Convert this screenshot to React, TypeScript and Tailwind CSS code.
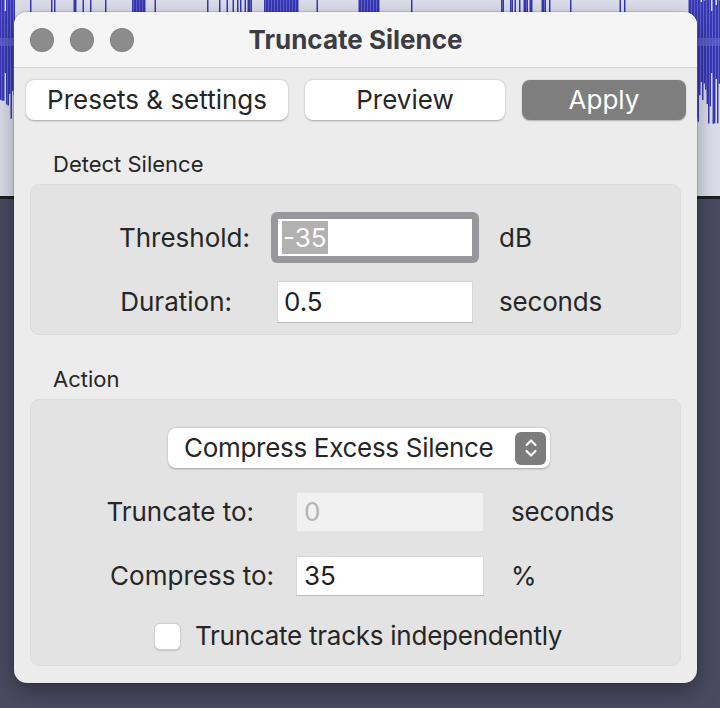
import React from 'react';

// deterministic pseudo random for the waveform behind the dialog
const rand = (i: number) => {
  const x = Math.sin(i * 12.9898 + 78.233) * 43758.5453;
  return x - Math.floor(x);
};

// loud spots of the track that rise above the dialog: [from, to, dense]
const loud: [number, number, boolean][] = [
  [0, 8, true], [9, 14, false], [30, 31, true], [50, 55, false], [73, 85, false],
  [89, 90, true], [105, 106, true], [131, 145, true], [154, 155, true], [206, 211, false],
  [216, 252, false], [264, 298, true], [316, 317, true], [358, 378, true], [410, 411, true],
  [498, 550, false], [569, 573, false], [617, 624, false], [688, 720, true],
];

const bars = Array.from({ length: 480 }, (_, i) => {
  const x = i * 1.5;
  const r = rand(i);
  const spot = loud.find(([a, b]) => x >= a && x <= b);
  let amp = 4 + r * 22;
  if (spot && (spot[2] || r > 0.5)) amp = 44 + rand(i + 999) * 40;
  if (x < 14 || x > 697) amp = 30 + rand(i + 7) * 55;
  return { x, amp };
});

const Waveform = () => (
  <svg className="absolute inset-0" width={720} height={708} viewBox="0 0 720 708">
    <rect x={0} y={0} width={720} height={196} fill="#dddfeb" />
    {bars.map((b) => (
      <line
        key={b.x}
        x1={b.x + 0.75}
        x2={b.x + 0.75}
        y1={Math.max(0, 42 - b.amp)}
        y2={42 + b.amp}
        stroke="#2f2fb6"
        strokeWidth={1.4}
      />
    ))}
    <rect x={0} y={38} width={720} height={8} fill="#6b6bd4" opacity={0.6} />
    <rect x={0} y={196} width={720} height={3} fill="#202022" />
    <rect x={0} y={199} width={720} height={509} fill="#4a4a62" />
  </svg>
);

const PushButton = ({ label, primary }: { label: string; primary?: boolean }) => (
  <button
    className={
      primary
        ? 'h-[40px] rounded-[8px] bg-[#7e7e7e] text-[26px] leading-[30px] text-white shadow-[0_0.5px_1.5px_rgba(0,0,0,0.25)]'
        : 'h-[40px] rounded-[8px] bg-white text-[26px] leading-[30px] text-[#262626] shadow-[0_0.5px_2px_rgba(0,0,0,0.3)]'
    }
  >
    {label}
  </button>
);

export default function App() {
  return (
    <div
      className="relative h-[708px] w-[720px] overflow-hidden"
      style={{ fontFamily: 'Inter, "Liberation Sans", sans-serif' }}
    >
      <Waveform />

      <div className="relative ml-[14px] mt-[12px] flex h-[671px] w-[683px] flex-col overflow-hidden rounded-[13px] bg-[#ececec] shadow-[0_0_0_1px_rgba(0,0,0,0.12),0_8px_24px_rgba(0,0,0,0.35)]">
        {/* title bar */}
        <div className="relative flex h-[56px] items-center border-b border-[#d4d4d4] bg-[#f5f5f5] pl-[16px]">
          <div className="flex gap-[16px]">
            <span className="h-[24px] w-[24px] rounded-full bg-[#8c8c8c] shadow-[inset_0_0_0_1px_rgba(0,0,0,0.1)]" />
            <span className="h-[24px] w-[24px] rounded-full bg-[#8c8c8c] shadow-[inset_0_0_0_1px_rgba(0,0,0,0.1)]" />
            <span className="h-[24px] w-[24px] rounded-full bg-[#8c8c8c] shadow-[inset_0_0_0_1px_rgba(0,0,0,0.1)]" />
          </div>
          <div className="absolute inset-0 flex items-center justify-center text-[26px] font-bold text-[#3c3c43]">
            Truncate Silence
          </div>
        </div>

        {/* buttons */}
        <div className="grid grid-cols-[262px_200px_164px] gap-x-[17px] pl-[12px] pt-[12px]">
          <PushButton label="Presets & settings" />
          <PushButton label="Preview" />
          <PushButton label="Apply" primary />
        </div>

        {/* detect silence */}
        <div className="pl-[39px] pt-[32px] text-[22px] leading-[24px] text-[#262626]">Detect Silence</div>
        <div className="mx-[16px] mt-[8px] flex h-[151px] flex-col gap-[18px] rounded-[9px] border border-[#dcdcdc] bg-[#e3e3e3] pt-[27px] text-[26px] leading-[30px] text-[#262626]">
          <div className="flex items-center">
            <span className="w-[219px] text-right">Threshold:</span>
            <div className="ml-[21px] flex h-[51px] w-[208px] items-center rounded-[6px] bg-[#98989c] p-[7px]">
              <div className="flex h-full w-full items-center bg-white pl-[4px]">
                <span className="bg-[#b1b1b1] px-[1px] leading-[33px] text-white">-35</span>
              </div>
            </div>
            <span className="ml-[20px]">dB</span>
          </div>
          <div className="flex items-center">
            <span className="w-[201px] text-right">Duration:</span>
            <div className="ml-[45px] flex h-[42px] w-[196px] items-center border border-[#d6d6da] border-b-[#b9b9be] bg-white px-[6px] text-[#1f1f1f]">
              0.5
            </div>
            <span className="ml-[26px] tracking-[-0.2px]">seconds</span>
          </div>
        </div>

        {/* action */}
        <div className="pl-[39px] pt-[32px] text-[22px] leading-[24px] text-[#262626]">Action</div>
        <div className="mx-[16px] mt-[8px] flex h-[267px] flex-col rounded-[9px] border border-[#dcdcdc] bg-[#e3e3e3] pt-[28px] text-[26px] leading-[30px] text-[#262626]">
          <div className="flex pl-[137px]">
            <div className="flex h-[40px] w-[382px] items-center rounded-[8px] bg-white pl-[16px] pr-[4px] shadow-[0_0.5px_2px_rgba(0,0,0,0.3)]">
              <span className="flex-1 tracking-[-0.3px]">Compress Excess Silence</span>
              <span className="flex h-[33px] w-[31px] items-center justify-center rounded-[6px] bg-[#7c7c7c]">
                <svg width="16" height="22" viewBox="0 0 16 22" fill="none" stroke="white" strokeWidth="2.2" strokeLinecap="round" strokeLinejoin="round">
                  <path d="M3.5 8 L8 3.5 L12.5 8" />
                  <path d="M3.5 14 L8 18.5 L12.5 14" />
                </svg>
              </span>
            </div>
          </div>

          <div className="mt-[24px] flex items-center">
            <span className="w-[223px] text-right">Truncate to:</span>
            <div className="ml-[42px] flex h-[40px] w-[188px] items-center border border-[#e2e2e2] bg-[#f1f1f1] px-[7px] text-[#b5b5b5]">
              0
            </div>
            <span className="ml-[27px] tracking-[-0.2px]">seconds</span>
          </div>

          <div className="mt-[24px] flex items-center">
            <span className="w-[243px] text-right">Compress to:</span>
            <div className="ml-[22px] flex h-[40px] w-[188px] items-center border border-[#d6d6da] border-b-[#b9b9be] bg-white px-[7px] text-[#1f1f1f]">
              35
            </div>
            <span className="ml-[27px]">%</span>
          </div>

          <div className="mt-[25px] flex items-center pl-[123px]">
            <span className="h-[27px] w-[27px] rounded-[6px] border border-[#d0d0d0] bg-white shadow-[0_0.5px_1px_rgba(0,0,0,0.15)]" />
            <span className="ml-[14px] tracking-[-0.25px]">Truncate tracks independently</span>
          </div>
        </div>
      </div>
    </div>
  );
}
